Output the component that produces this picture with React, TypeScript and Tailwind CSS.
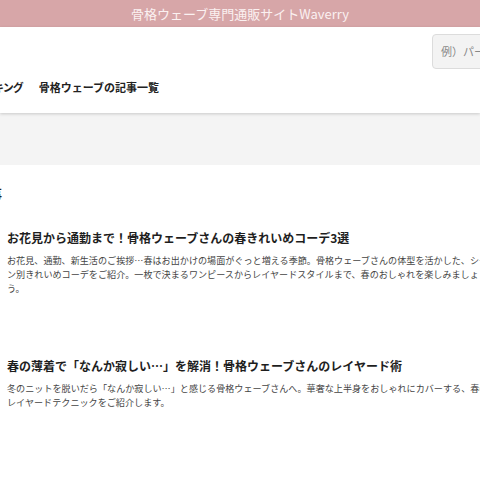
import React from "react";

const font = { fontFamily: '"Noto Sans CJK JP", "Noto Sans", sans-serif' };

export default function App() {
  return (
    <div className="w-[480px] h-[480px] overflow-hidden bg-white" style={font}>
      {/* top bar */}
      <div className="h-[27px] bg-[#d7a6a8] flex items-center justify-center text-[13px] text-[#fbf1f1] leading-none">
        骨格ウェーブ専門通販サイトWaverry
      </div>
      {/* header */}
      <div className="h-[86px] bg-white shadow-[0_1px_3px_rgba(0,0,0,0.18)] relative z-10 flex flex-col">
        <div className="flex justify-end pt-[7px] h-[55px]">
          <div className="w-[60px] h-[35px] mr-[-12px] rounded-[4px] border border-[#dcdcdc] bg-[#f3f3f3] flex items-center pl-[8px] text-[11px] text-[#888] whitespace-nowrap overflow-hidden">
            例）パーカー
          </div>
        </div>
        <div className="flex items-center gap-[16px] ml-[-27px] text-[11px] font-bold text-[#222] whitespace-nowrap leading-none">
          <span className="tracking-[-1px]">ランキング</span>
          <span>骨格ウェーブの記事一覧</span>
        </div>
      </div>
      {/* gray band */}
      <div className="h-[52px] bg-[#f4f4f4]" />
      {/* section heading */}
      <div className="pt-[20px] whitespace-nowrap">
        <div className="ml-[-50px] text-[13px] font-bold text-[#222] leading-[18px]">新着記事</div>
      </div>
      {/* articles */}
      <div className="flex flex-col pl-[7px] pt-[27px] gap-[63px]">
        <div className="w-[483px]">
          <h2 className="text-[12px] font-bold text-[#1e1e1e] leading-[16px] whitespace-nowrap">
            お花見から通勤まで！骨格ウェーブさんの春きれいめコーデ3選
          </h2>
          <p className="mt-[7px] text-[9.1px] leading-[14px] text-[#444]">
            お花見、通勤、新生活のご挨拶…春はお出かけの場面がぐっと増える季節。骨格ウェーブさんの体型を活かした、シーン別きれいめコーデをご紹介。一枚で決まるワンピースからレイヤードスタイルまで、春のおしゃれを楽しみましょう。
          </p>
        </div>
        <div className="w-[483px]">
          <h2 className="text-[12px] font-bold text-[#1e1e1e] leading-[16px] whitespace-nowrap">
            春の薄着で「なんか寂しい…」を解消！骨格ウェーブさんのレイヤード術
          </h2>
          <p className="mt-[7px] text-[9.1px] leading-[14px] text-[#444]">
            冬のニットを脱いだら「なんか寂しい…」と感じる骨格ウェーブさんへ。華奢な上半身をおしゃれにカバーする、春のレイヤードテクニックをご紹介します。
          </p>
        </div>
      </div>
    </div>
  );
}
